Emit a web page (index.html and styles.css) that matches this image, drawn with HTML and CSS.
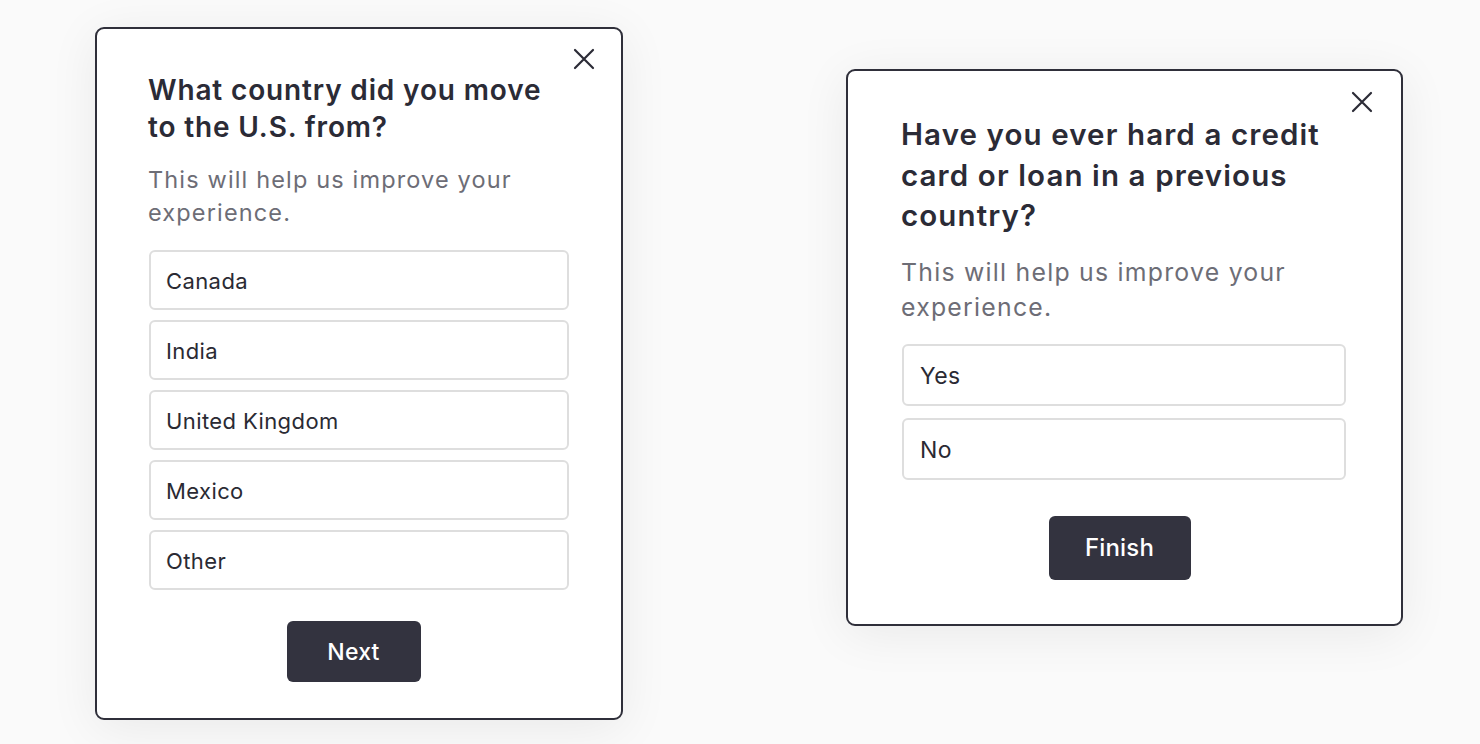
FILE: index.html
```html
<!DOCTYPE html>
<html lang="en">
<head>
<meta charset="utf-8">
<title>Survey cards</title>
<link rel="stylesheet" href="styles.css">
</head>
<body>
<main class="stage">
  <section class="card card-a">
    <button class="close" aria-label="Close">
      <svg viewBox="0 0 24 24" width="24" height="24"><path d="M3 3 L21 21 M21 3 L3 21" stroke="#2b2b36" stroke-width="2.2" stroke-linecap="round" fill="none"/></svg>
    </button>
    <h2 class="title">What country did you move to the U.S. from?</h2>
    <p class="sub">This will help us improve your experience.</p>
    <ul class="options">
      <li class="opt">Canada</li>
      <li class="opt">India</li>
      <li class="opt">United Kingdom</li>
      <li class="opt">Mexico</li>
      <li class="opt">Other</li>
    </ul>
    <div class="actions"><button class="btn">Next</button></div>
  </section>

  <section class="card card-b">
    <button class="close" aria-label="Close">
      <svg viewBox="0 0 24 24" width="24" height="24"><path d="M3 3 L21 21 M21 3 L3 21" stroke="#2b2b36" stroke-width="2.2" stroke-linecap="round" fill="none"/></svg>
    </button>
    <h2 class="title">Have you ever hard a credit card or loan in a previous country?</h2>
    <p class="sub">This will help us improve your experience.</p>
    <ul class="options">
      <li class="opt">Yes</li>
      <li class="opt">No</li>
    </ul>
    <div class="actions"><button class="btn">Finish</button></div>
  </section>
</main>
</body>
</html>
```

FILE: styles.css
```css
* { box-sizing: border-box; }
html, body { margin: 0; padding: 0; }
body {
  width: 1480px;
  height: 744px;
  overflow: hidden;
  background: #fafafa;
  font-family: "Inter", "Liberation Sans", sans-serif;
  color: #2b2b36;
}
.stage {
  display: flex;
  align-items: flex-start;
  gap: 223px;
  padding: 27px 0 0 95px;
}
.card {
  position: relative;
  background: #fff;
  border: 2px solid #2f2f3a;
  border-radius: 9px;
  box-shadow: 0 8px 50px rgba(0, 0, 0, 0.07);
  display: flex;
  flex-direction: column;
}
.card-a {
  width: 528px;
  height: 693px;
  padding: 43px 52px 36px 51px;
}
.card-b {
  width: 557px;
  height: 557px;
  margin-top: 42px;
  padding: 43px 55px 44px 53px;
}
.close {
  position: absolute;
  top: 18px;
  right: 25px;
  width: 24px;
  height: 24px;
  padding: 0;
  border: 0;
  background: none;
  display: flex;
}
.card-b .close { top: 19px; right: 27px; }
.title {
  margin: 0;
  font-weight: 600;
  font-size: 28px;
  line-height: 37px;
  letter-spacing: 0.85px;
  color: #2b2b36;
}
.card-b .title {
  font-size: 29.5px;
  line-height: 40.5px;
  letter-spacing: 1.1px;
}
.sub {
  margin: 17px 0 0;
  font-size: 23.5px;
  line-height: 33px;
  letter-spacing: 1.15px;
  color: #6d6d76;
}
.card-b .sub {
  margin-top: 19px;
  font-size: 24.8px;
  line-height: 35px;
  letter-spacing: 1.25px;
}
.options {
  list-style: none;
  margin: 21px 0 0;
  padding: 0 0 0 1px;
  display: flex;
  flex-direction: column;
  gap: 10px;
}
.card-b .options { gap: 12px; margin-top: 19px; }
.opt {
  height: 60px;
  border: 2px solid #dedede;
  border-radius: 6px;
  display: flex;
  align-items: center;
  padding: 2px 0 0 15px;
  font-size: 22px;
  letter-spacing: 0.4px;
  color: #2a2a33;
}
.card-b .opt {
  height: 62px;
  padding-left: 16px;
  font-size: 23px;
}
.actions {
  margin-top: 31px;
  display: flex;
  justify-content: center;
  padding-right: 10px;
}
.card-b .actions { margin-top: 36px; padding-right: 8px; }
.btn {
  width: 134px;
  height: 61px;
  border: 0;
  border-radius: 6px;
  background: #33333f;
  color: #fff;
  font-family: "Inter", "Liberation Sans", sans-serif;
  font-size: 23px;
  font-weight: 500;
  letter-spacing: 0.2px;
}
.card-b .btn {
  width: 142px;
  height: 64px;
  font-size: 24px;
}
```
